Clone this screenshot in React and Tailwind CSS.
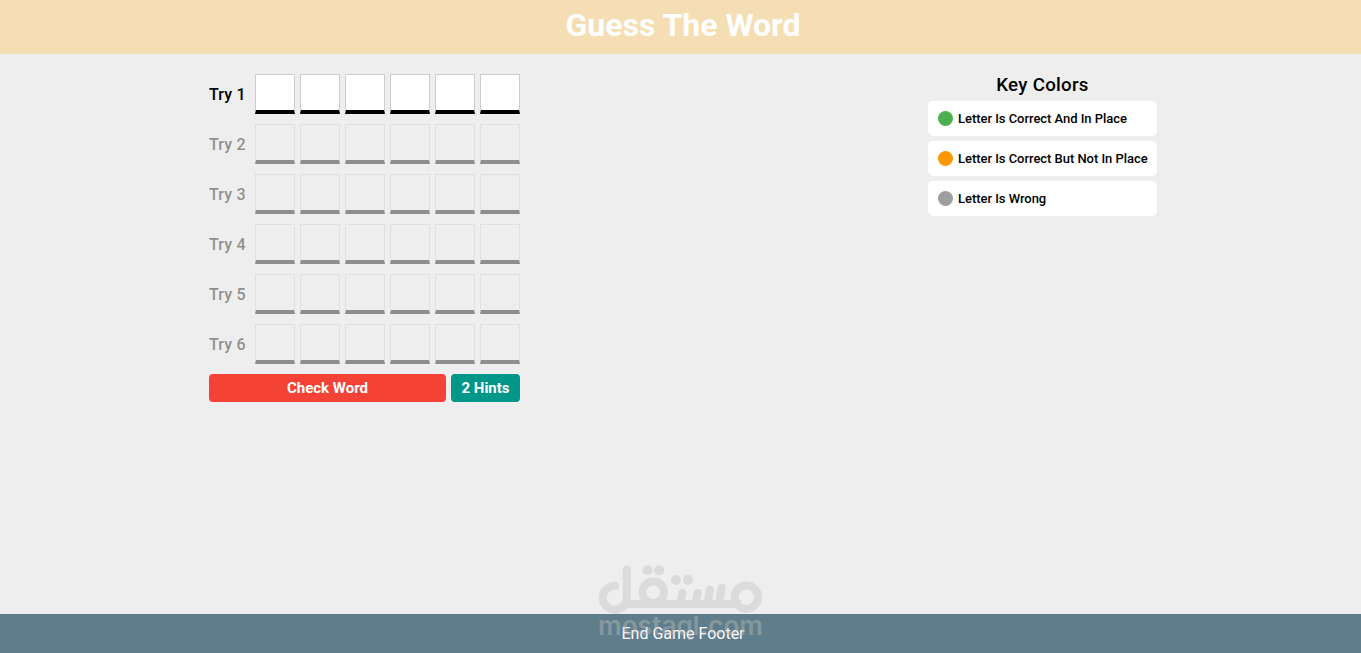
import { useState } from "react";

const numberOfTries = 6;
const numberOfLetters = 6;

const keyColors = [
  { color: "bg-[#4caf50]", label: "Letter Is Correct And In Place" },
  { color: "bg-[#ff9800]", label: "Letter Is Correct But Not In Place" },
  { color: "bg-[#9e9e9e]", label: "Letter Is Wrong" },
];

const Try = ({ number, active }) => (
  <div className={`flex items-center gap-[5px] ${active ? "" : "opacity-40"}`}>
    <span className="w-[41px] pt-0.5 text-base font-medium tracking-[0.15px] text-black">
      Try {number}
    </span>
    {Array.from({ length: numberOfLetters }, (_, i) => (
      <input
        key={i}
        type="text"
        maxLength={1}
        disabled={!active}
        aria-label={`Try ${number} letter ${i + 1}`}
        className={`size-10 border border-b-4 border-[#ccc] border-b-black text-center text-lg font-bold uppercase outline-none ${
          active ? "bg-white" : "bg-transparent"
        }`}
      />
    ))}
  </div>
);

const Watermark = () => (
  <svg
    className="pointer-events-none absolute bottom-0 left-[590px] h-[98px] w-[180px]"
    viewBox="0 0 180 98"
    aria-hidden="true"
  >
    <g opacity="0.4" fill="none" stroke="#c0c0c0" strokeWidth="8" strokeLinecap="round">
      <path d="M25 30.7A12 12 0 1 0 36.8 42.5V14.5" />
      <path d="M36 49H151" strokeLinecap="butt" />
      <circle cx="63.3" cy="37.3" r="10.8" />
      <path d="M92.3 38L90.5 49M107.6 38L105.5 49M120 34.7L117.5 49M131.7 32.7L129 49" />
      <circle cx="156.3" cy="42.2" r="11.7" />
      <g fill="#c0c0c0" stroke="none">
        <circle cx="57.5" cy="15.2" r="5" />
        <circle cx="69.2" cy="15.2" r="5" />
        <circle cx="86" cy="25" r="5" />
        <circle cx="98" cy="25" r="5" />
        <text
          x="8"
          y="79.7"
          fontFamily="Inter, sans-serif"
          fontSize="26"
          fontWeight="600"
          textLength="165"
          lengthAdjust="spacingAndGlyphs"
        >
          mostaql.com
        </text>
      </g>
    </g>
  </svg>
);

const App = () => {
  const [currentTry] = useState(1);

  return (
    <div className="overflow-hidden">
      <div className="relative flex h-[653px] w-[1366px] flex-col bg-[#eee] font-['Roboto',sans-serif]">
        <h1 className="flex h-[54px] items-center justify-center bg-[#f5deb3] pb-1 text-[32px] font-bold text-white">
          Guess The Word
        </h1>

        <main className="mx-auto flex w-[948px] flex-grow items-start justify-between pt-5">
          <div className="w-[311px]">
            <div className="flex flex-col gap-2.5">
              {Array.from({ length: numberOfTries }, (_, i) => (
                <Try key={i} number={i + 1} active={i + 1 === currentTry} />
              ))}
            </div>
            <div className="mt-2.5 flex h-7 gap-[5px] text-[15px] font-bold text-white">
              <button className="flex-1 rounded-[4px] bg-[#f44336]">Check Word</button>
              <button className="w-[69px] rounded-[4px] bg-[#009688]">2 Hints</button>
            </div>
          </div>

          <div className="w-[229px]">
            <h2 className="mb-[5px] text-center text-[18.72px] leading-[22px] font-medium tracking-[0.28px] text-black">
              Key Colors
            </h2>
            <div className="flex flex-col gap-[5px]">
              {keyColors.map((item) => (
                <div
                  key={item.label}
                  className="flex h-[35px] items-center gap-[5px] rounded-[5px] bg-white pl-2.5 text-[13px] font-medium tracking-[-0.04px] whitespace-nowrap text-black"
                >
                  <span className={`size-[15px] rounded-full ${item.color}`} />
                  {item.label}
                </div>
              ))}
            </div>
          </div>
        </main>

        <footer className="flex h-[39px] items-center justify-center bg-[#607d8b] text-base text-white">
          End Game Footer
        </footer>
        <Watermark />
      </div>
    </div>
  );
};

export default App;
